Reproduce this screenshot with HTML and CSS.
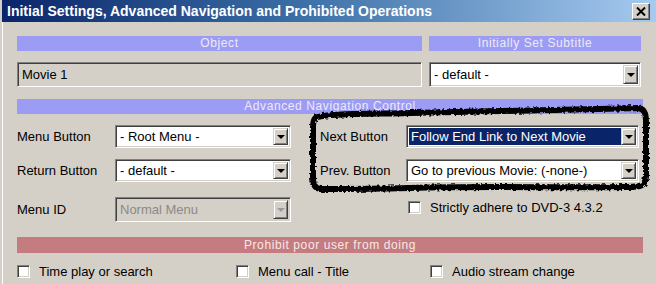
FILE: index.html
```html
<!DOCTYPE html>
<html lang="en">
<head>
    <meta charset="UTF-8">
    <title>Initial Settings, Advanced Navigation and Prohibited Operations</title>
    <link rel="stylesheet" href="styles.css">
</head>
<body>

    <div class="window">
        <div class="titlebar">
            <span class="title">Initial Settings, Advanced Navigation and Prohibited Operations</span>
            <span class="close">
                <svg width="10" height="9" viewBox="0 0 10 9"><path d="M1 0.5 L9 8.5 M9 0.5 L1 8.5" stroke="#000" stroke-width="2"/></svg>
            </span>
        </div>

        <div class="content">
            <div class="top-grid">
                <div class="bar blue">Object</div>
                <div class="bar blue">Initially Set Subtitle</div>
                <div class="textbox">Movie 1</div>
                <div class="combo tall"><span class="value">- default -</span><span class="arrow"></span></div>
            </div>

            <div class="bar blue nav-bar">Advanced Navigation Control</div>

            <div class="nav-grid">
                <div class="nav-col">
                    <div class="row r1">
                        <label>Menu Button</label>
                        <div class="combo short"><span class="value">- Root Menu -</span><span class="arrow"></span></div>
                    </div>
                    <div class="row r2">
                        <label>Return Button</label>
                        <div class="combo short"><span class="value">- default -</span><span class="arrow"></span></div>
                    </div>
                    <div class="row r3">
                        <label>Menu ID</label>
                        <div class="combo short disabled tall"><span class="value">Normal Menu</span><span class="arrow"></span></div>
                    </div>
                </div>
                <div class="nav-col right">
                    <div class="row r1">
                        <label>Next Button</label>
                        <div class="combo long"><span class="value selected">Follow End Link to Next Movie</span><span class="arrow"></span></div>
                    </div>
                    <div class="row r2">
                        <label>Prev. Button</label>
                        <div class="combo long"><span class="value">Go to previous Movie: (-none-)</span><span class="arrow"></span></div>
                    </div>
                    <div class="row r3 strict">
                        <span class="check"></span>
                        <span>Strictly adhere to DVD-3 4.3.2</span>
                    </div>
                </div>
            </div>

            <div class="bar red">Prohibit poor user from doing</div>

            <div class="checks">
                <div class="check-item c1"><span class="check"></span><span>Time play or search</span></div>
                <div class="check-item c2"><span class="check"></span><span>Menu call - Title</span></div>
                <div class="check-item c3"><span class="check"></span><span>Audio stream change</span></div>
            </div>
        </div>

        <!-- hand-drawn marker around next/prev -->
        <svg class="scribble" width="656" height="284" viewBox="0 0 656 284">
            <defs>
                <filter id="rough" x="-5%" y="-5%" width="110%" height="110%">
                    <feTurbulence type="fractalNoise" baseFrequency="0.35" numOctaves="2" seed="3"/>
                    <feDisplacementMap in="SourceGraphic" scale="4"/>
                </filter>
            </defs>
            <path d="M318 117 C 330 113, 380 114, 410 113 C 480 112, 560 110, 638 108 C 646 109, 646 116, 646 124 L 646 176 C 646 186, 640 187, 628 187 C 560 188, 480 186, 410 188 C 370 189, 340 189, 322 189 C 314 189, 313 184, 313 176 L 313 128 C 313 121, 314 117, 318 117 Z"
                  fill="none" stroke="#000" stroke-width="6" stroke-linejoin="round" filter="url(#rough)"/>
        </svg>
    </div>

</body>
</html>
```

FILE: styles.css
```css
body {
    margin: 0;
    font-family: "Liberation Sans", Arial, sans-serif;
    font-size: 13px;
    color: #000;
}
.window {
    position: relative;
    width: 656px;
    height: 284px;
    overflow: hidden;
    box-sizing: border-box;
    background-color: #d4d0c8;
    border-left: 2px solid #d4d0c8;
    box-shadow: inset 3px 0 0 -2px #fff;
}
.titlebar {
    height: 22px;
    margin-left: -2px;
    display: flex;
    align-items: center;
    justify-content: space-between;
    padding: 0 6px 0 7px;
    background: linear-gradient(to right, #0a246a 0%, #3a6ea5 45%, #a6caf0 100%);
}
.title {
    color: #fff;
    font-weight: bold;
    font-size: 14px;
}
.close {
    width: 16px;
    height: 15px;
    display: flex;
    align-items: center;
    justify-content: center;
    background-color: #d4d0c8;
    border: 1px solid;
    border-color: #fff #404040 #404040 #fff;
    box-shadow: inset -1px -1px 0 #808080;
}
.content {
    padding: 14px 13px 0 15px;
}
.top-grid {
    display: grid;
    grid-template-columns: 405px 212px;
    column-gap: 7px;
    row-gap: 11px;
}
.bar {
    height: 15px;
    line-height: 15px;
    text-align: center;
    font-size: 12px;
    letter-spacing: 0.6px;
    color: #eceaf6;
}
.blue {
    background-color: #9d9cf4;
}
.red {
    background-color: #c47c80;
    margin-top: 15px;
    height: 16px;
    line-height: 16px;
    color: #f6e8e8;
}
.nav-bar {
    margin-top: 12px;
}
.textbox {
    height: 25px;
    box-sizing: border-box;
    padding: 4px 4px 0;
    border: 1px solid;
    border-color: #808080 #fff #fff #808080;
    box-shadow: inset 1px 1px 0 #404040;
    background-color: #d4d0c8;
}
.combo {
    position: relative;
    height: 23px;
    box-sizing: border-box;
    display: flex;
    background-color: #fff;
    border: 1px solid;
    border-color: #808080 #fff #fff #808080;
    box-shadow: inset 1px 1px 0 #404040, inset -1px -1px 0 #d4d0c8;
    padding: 2px;
}
.combo.tall {
    height: 25px;
}
.combo .value {
    flex: 1;
    padding-left: 2px;
    line-height: 17px;
    white-space: nowrap;
}
.combo.tall .value {
    line-height: 19px;
}
.combo .value.selected {
    background-color: #0a246a;
    color: #fff;
}
.combo .arrow {
    position: relative;
    width: 15px;
    box-sizing: border-box;
    background-color: #d4d0c8;
    border: 1px solid;
    border-color: #d4d0c8 #404040 #404040 #d4d0c8;
    box-shadow: inset 1px 1px 0 #fff, inset -1px -1px 0 #808080;
}
.combo .arrow::after {
    content: "";
    position: absolute;
    left: 3px;
    top: 50%;
    margin-top: -2px;
    border-left: 4px solid transparent;
    border-right: 4px solid transparent;
    border-top: 4px solid #000;
}
.combo.disabled {
    background-color: #d4d0c8;
    color: #8a8a8a;
}
.combo.disabled .arrow::after {
    border-top-color: #9a9a9a;
}
.combo.short {
    width: 176px;
}
.combo.long {
    width: 233px;
}
.nav-grid {
    display: grid;
    grid-template-columns: 303px 321px;
}
.row {
    display: flex;
    align-items: center;
}
.row label {
    width: 98px;
}
.right .row label {
    width: 86px;
}
.r1 {
    margin-top: 11px;
}
.r2 {
    margin-top: 11px;
}
.r3 {
    margin-top: 15px;
}
.strict {
    margin-top: 18px;
    padding-left: 88px;
    gap: 9px;
}
.check {
    width: 13px;
    height: 13px;
    box-sizing: border-box;
    background-color: #fff;
    border: 1px solid;
    border-color: #808080 #fff #fff #808080;
    box-shadow: inset 1px 1px 0 #404040, inset -1px -1px 0 #d4d0c8;
}
.checks {
    display: flex;
    margin-top: 11px;
}
.check-item {
    display: flex;
    align-items: center;
    gap: 9px;
}
.c1 {
    width: 219px;
}
.c2 {
    width: 194px;
}
.scribble {
    position: absolute;
    left: -2px;
    top: 0;
}
```
